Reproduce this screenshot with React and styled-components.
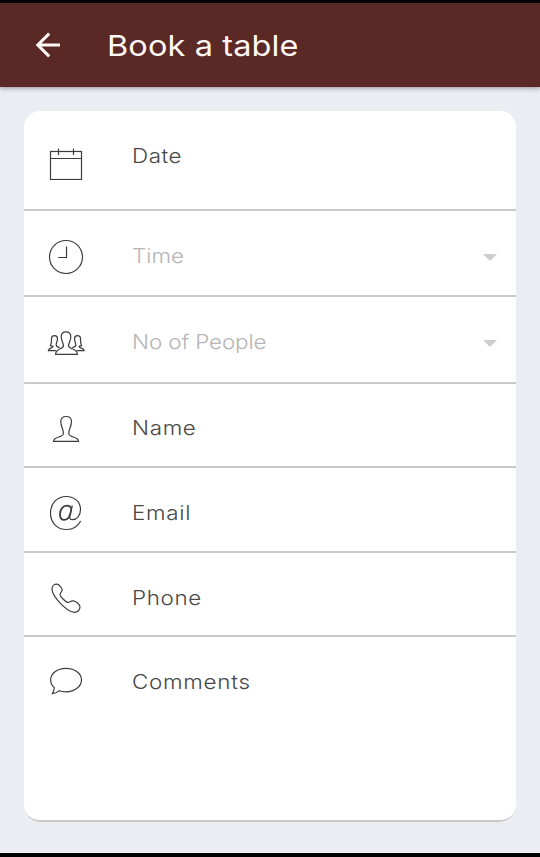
import React from "react";
import styled, { createGlobalStyle } from "styled-components";

const fields = [
  { name: "Date", icon: "calendar", height: 100, spacing: 0.5 },
  { name: "Time", icon: "clock", height: 86, spacing: 0, select: true },
  { name: "No of People", icon: "people", height: 87, spacing: -0.1, select: true },
  { name: "Name", icon: "person", height: 84, spacing: 0.6, shift: -1 },
  { name: "Email", icon: "at", height: 85, spacing: 0.65 },
  { name: "Phone", icon: "phone", height: 84, spacing: 0.55 },
  { name: "Comments", icon: "comment", height: 185, spacing: 0.65 },
];

const icons = {
  calendar: (
    <>
      <rect x="4.5" y="19.5" width="31" height="28" />
      <path d="M4.5 26.5H35.5M12.5 16.5V23M27.5 16.5V23" />
    </>
  ),
  clock: (
    <>
      <circle cx="20" cy="25" r="16.5" />
      <path d="M20.5 14.5V25.5H12" />
    </>
  ),
  people: (
    <>
      <path d="M17.5 27.2C16.9 24.4 15.2 22.4 15.2 18.8C15.2 15.6 17 13.9 20 13.9S24.8 15.6 24.8 18.8C24.8 22.4 23.1 24.4 22.5 27.2C22.1 31.8 31.4 29.6 31.4 36.4H9.6C9.6 29.6 17.9 31.8 17.5 27.2Z" />
      <path d="M13.7 29.5C11.8 29 10 28.8 10.2 26.7C10.3 25 11.5 23.5 11.5 20.8C11.5 18.8 10.4 17.7 8.6 17.7S5.5 18.8 5.5 20.8C5.5 23.5 5.2 26.3 4.4 27.5C5.2 28.2 6.4 28 7 28.3C6.5 30.5 2.6 29.7 2.4 32.6H10" />
      <path d="M26.3 29.5C28.2 29 30 28.8 29.8 26.7C29.7 25 28.5 23.5 28.5 20.8C28.5 18.8 29.6 17.7 31.4 17.7S34.5 18.8 34.5 20.8C34.5 23.5 34.8 26.3 35.6 27.5C34.8 28.2 33.6 28 33 28.3C33.5 30.5 37.9 29.7 38.1 32.6H30.5" />
    </>
  ),
  person: (
    <path d="M17.4 28.8C18 24.2 14.8 22.5 14.8 16.6C14.8 13.2 16.8 11.5 20.1 11.5S25.5 13.2 25.5 16.6C25.5 22.5 22.2 24.2 22.8 28.8C23.2 32.8 32.4 31.3 32.6 36.4H7.5C7.7 31.3 17 32.8 17.4 28.8Z" />
  ),
  at: (
    <>
      <path d="M34.7 32C31.7 37.6 26.6 40.5 20.5 40.5C11 40.5 4.5 33.5 4.5 24S11 7.5 20.3 7.5C28.5 7.5 34.5 13 34.5 20.4C34.5 26.5 30.8 30.7 26.6 30.7C23.7 30.7 23.5 28.8 24 26.4L26.3 16.5" />
      <path strokeWidth="1.8" d="M25.3 20.1C24.8 17.7 23.1 16.6 20.9 16.6C16.9 16.6 14 20.6 14 25.2C14 28.8 15.5 30.9 18.2 30.9C21.5 30.9 24.4 27.4 25.3 20.1Z" />
    </>
  ),
  phone: (
    <path d="M6 15.1C6 12.1 8.4 10.2 10.9 10.2C12.8 10.2 16.2 14.2 16.2 16.1C16.2 17.7 14.1 18.6 14.1 20.4C14.1 22.6 20 28.4 22.1 28.4C23.9 28.4 24.4 26.8 27.3 26.9C30.3 27 34 30.9 34 33.1C34 35.9 31.6 38.3 28.5 38.3C21.6 38.3 6 22.8 6 15.1Z" />
  ),
  comment: (
    <path d="M13.2 32.7C15.2 33.5 17.5 33.8 20 33.8C28.8 33.8 35.5 28.4 35.5 22S28.8 10.4 20 10.4S4.6 15.6 4.6 22C4.6 25 6 27.6 8.3 29.6C8.2 32 7.5 34 6.4 35.6C9.3 35.4 11.6 34.4 13.2 32.7Z" />
  ),
};

const Field = ({ field }) => (
  <Row $height={field.height}>
    <Icon viewBox="0 0 40 48">{icons[field.icon]}</Icon>
    <Label $muted={field.select} $spacing={field.spacing} $shift={field.shift}>
      {field.name}
    </Label>
    {field.select && (
      <Caret viewBox="0 0 14 7">
        <path d="M0 0H14L7 7Z" />
      </Caret>
    )}
  </Row>
);

const App = () => {
  return (
    <Screen>
      <GlobalStyle />
      <Header>
        <BackButton aria-label="Back">
          <Arrow viewBox="0 0 26 26">
            <path d="M14.2 1.6L2.8 13L14.2 24.4M2.8 13H25" />
          </Arrow>
        </BackButton>
        <Title>Book a table</Title>
      </Header>

      {/* booking form */}
      <Content>
        <Card>
          {fields.map((field) => (
            <Field key={field.name} field={field} />
          ))}
        </Card>
      </Content>
    </Screen>
  );
};

const GlobalStyle = createGlobalStyle`
  * {
    box-sizing: border-box;
  }

  body {
    margin: 0;
    font-family: Inter, "Open Sans", sans-serif;
  }
`;

const Screen = styled.div`
  display: flex;
  flex-direction: column;
  width: 540px;
  height: 857px;
  border-top: 3px solid #000;
  border-bottom: 4px solid #000;
  background: #ecedf2;
`;

const Header = styled.header`
  display: flex;
  align-items: center;
  flex-shrink: 0;
  height: 84px;
  padding-left: 35px;
  background: #5a2825;
  box-shadow: 0 1px 5px rgba(0, 0, 0, 0.4);
`;

const BackButton = styled.button`
  display: flex;
  padding: 0;
  border: 0;
  background: none;
`;

const Arrow = styled.svg`
  width: 26px;
  height: 26px;
  fill: none;
  stroke: #fff8f5;
  stroke-width: 3;
`;

/* wide letterforms: the text is stretched from its left edge */
const Title = styled.h1`
  margin: 1px 0 0 46px;
  font-size: 29px;
  font-weight: 400;
  line-height: 40px;
  letter-spacing: 0.1px;
  color: #fff8f5;
  white-space: nowrap;
  transform: scaleX(1.12);
  transform-origin: left;
`;

const Content = styled.main`
  flex: 1;
  padding: 24px 24px 0;
`;

const Card = styled.form`
  border-radius: 16px;
  background: #fff;
  overflow: hidden;
`;

const Row = styled.div`
  display: flex;
  align-items: flex-start;
  height: ${(props) => props.$height}px;
  padding: 21px 20px 0 22px;
  border-bottom: 2px solid #c9caca;

  &:last-child {
    border-radius: 0 0 16px 16px;
  }
`;

const Icon = styled.svg`
  flex-shrink: 0;
  width: 40px;
  height: 48px;
  fill: none;
  stroke: #3c3c3c;
  stroke-width: 1.2;
`;

const Label = styled.label`
  margin-left: 46px;
  margin-top: ${(props) => props.$shift || 0}px;
  font-size: 20px;
  font-weight: 300;
  line-height: 48px;
  letter-spacing: ${(props) => props.$spacing}px;
  color: ${(props) => (props.$muted ? "#b5b5b5" : "#484848")};
  white-space: nowrap;
  transform: scaleX(1.12);
  transform-origin: left;
`;

const Caret = styled.svg`
  width: 14px;
  height: 7px;
  margin: 22px -0.5px 0 auto;
  fill: #cdcdcd;
`;

export default App;
